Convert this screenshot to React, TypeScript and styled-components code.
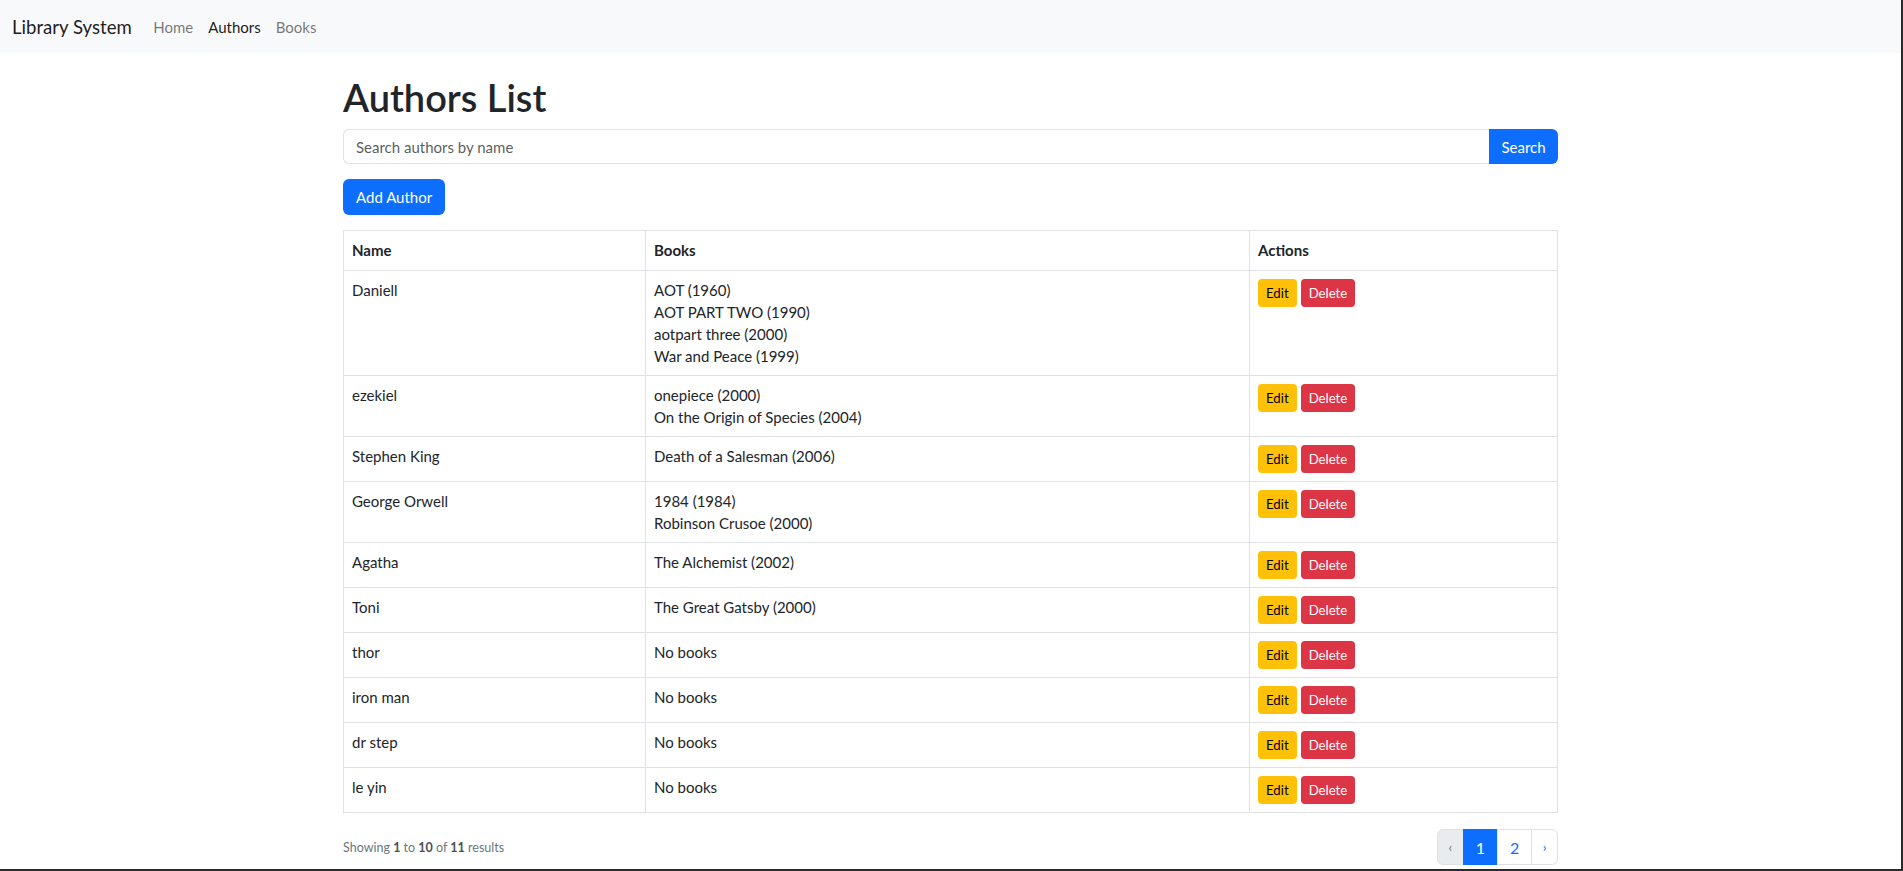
import React from "react";
import styled, { createGlobalStyle } from "styled-components";

const GlobalStyle = createGlobalStyle`
  *, *::before, *::after { box-sizing: border-box; }
  html, body { margin: 0; padding: 0; }
  body {
    font-family: Lato, "Open Sans", sans-serif;
    font-size: 15px;
    color: #212529;
    background: #fff;
  }
`;

const Frame = styled.div`
  height: 100vh;
  border-right: 2px solid #2b2b2b;
  border-bottom: 2px solid #2b2b2b;
  overflow: hidden;
`;

const Navbar = styled.nav`
  height: 53px;
  background: #f8f9fa;
  display: flex;
  align-items: center;
  padding: 0 12px;
`;

const Brand = styled.a`
  font-size: 18.6px;
  color: rgba(0, 0, 0, 0.9);
  margin-right: 14px;
  text-decoration: none;
`;

const NavLink = styled.a<{ $active?: boolean }>`
  padding: 0 7.5px;
  font-size: 15px;
  text-decoration: none;
  color: ${(p) => (p.$active ? "rgba(0,0,0,0.9)" : "rgba(0,0,0,0.55)")};
`;

const Container = styled.main`
  width: 1215px;
  margin: 0 auto;
  padding-top: 20px;
`;

const Title = styled.h1`
  margin: 0 0 8px;
  font-size: 38px;
  font-weight: 600;
  line-height: 48px;
`;

const SearchForm = styled.form`
  display: flex;
  height: 35px;
  margin-bottom: 15px;
`;

const SearchInput = styled.input`
  flex: 1;
  height: 100%;
  border: 1px solid #dee2e6;
  border-right: none;
  border-radius: 6px 0 0 6px;
  padding: 0 12px;
  font-family: inherit;
  font-size: 15px;
  color: #212529;
  outline: none;
  &::placeholder { color: rgba(33, 37, 41, 0.75); }
`;

const Button = styled.button<{ $variant: "primary" | "warning" | "danger"; $size?: "sm" }>`
  border: none;
  font-family: inherit;
  cursor: pointer;
  display: inline-flex;
  align-items: center;
  justify-content: center;
  background: ${(p) => (p.$variant === "primary" ? "#0d6efd" : p.$variant === "warning" ? "#ffc107" : "#dc3545")};
  color: ${(p) => (p.$variant === "warning" ? "#000" : "#fff")};
  font-size: ${(p) => (p.$size === "sm" ? "13.2px" : "15px")};
  height: ${(p) => (p.$size === "sm" ? "28px" : "36px")};
  padding: ${(p) => (p.$size === "sm" ? "0 8px" : "0 13px")};
  border-radius: ${(p) => (p.$size === "sm" ? "4px" : "6px")};
`;

const SearchButton = styled(Button)`
  height: 35px;
  width: 69px;
  border-radius: 0 6px 6px 0;
`;

const Table = styled.table`
  width: 100%;
  margin-top: 15px;
  border-collapse: collapse;
  table-layout: fixed;
`;

const Th = styled.th<{ $w?: string }>`
  width: ${(p) => p.$w || "auto"};
  text-align: left;
  font-weight: 700;
  padding: 8px;
  line-height: 23px;
  border: 1px solid #dee2e6;
`;

const Td = styled.td`
  padding: 8px;
  line-height: 22px;
  vertical-align: top;
  border: 1px solid #dee2e6;
`;

const ActionCell = styled(Td)`
  line-height: 0;
`;

const Actions = styled.div`
  display: flex;
  gap: 4px;
`;

const BookLine = styled.div`
  line-height: 22px;
`;

const Footer = styled.div`
  display: flex;
  justify-content: space-between;
  align-items: center;
  margin-top: 16px;
`;

const Summary = styled.p`
  margin: 0;
  font-size: 12.5px;
  color: #6c757d;
`;

const Strong = styled.span`
  font-weight: 700;
  color: #495057;
`;

const Pagination = styled.ul`
  display: flex;
  list-style: none;
  margin: 0;
  padding: 0;
`;

const PageItem = styled.li<{ $active?: boolean; $disabled?: boolean; $chev?: boolean }>`
  height: 36px;
  padding: 0 ${(p) => (p.$chev ? "10.5px" : "12px")};
  display: flex;
  align-items: center;
  justify-content: center;
  font-size: ${(p) => (p.$chev ? "13px" : "16px")};
  border: 1px solid ${(p) => (p.$active ? "#0d6efd" : "#dee2e6")};
  margin-left: -1px;
  background: ${(p) => (p.$active ? "#0d6efd" : p.$disabled ? "#e9ecef" : "#fff")};
  color: ${(p) => (p.$active ? "#fff" : p.$disabled ? "#6c757d" : "#0d6efd")};
  &:first-child { margin-left: 0; border-radius: 6px 0 0 6px; }
  &:last-child { border-radius: 0 6px 6px 0; }
`;

type Author = { name: string; books: string[] };

const authors: Author[] = [
  { name: "Daniell", books: ["AOT (1960)", "AOT PART TWO (1990)", "aotpart three (2000)", "War and Peace (1999)"] },
  { name: "ezekiel", books: ["onepiece (2000)", "On the Origin of Species (2004)"] },
  { name: "Stephen King", books: ["Death of a Salesman (2006)"] },
  { name: "George Orwell", books: ["1984 (1984)", "Robinson Crusoe (2000)"] },
  { name: "Agatha", books: ["The Alchemist (2002)"] },
  { name: "Toni", books: ["The Great Gatsby (2000)"] },
  { name: "thor", books: [] },
  { name: "iron man", books: [] },
  { name: "dr step", books: [] },
  { name: "le yin", books: [] },
];

export default function App() {
  return (
    <>
      <GlobalStyle />
      <Frame>
        <Navbar>
          <Brand href="#">Library System</Brand>
          <NavLink href="#">Home</NavLink>
          <NavLink href="#" $active>Authors</NavLink>
          <NavLink href="#">Books</NavLink>
        </Navbar>
        <Container>
          <Title>Authors List</Title>
          <SearchForm onSubmit={(e) => e.preventDefault()}>
            <SearchInput placeholder="Search authors by name" />
            <SearchButton $variant="primary" type="submit">Search</SearchButton>
          </SearchForm>
          <Button $variant="primary">Add Author</Button>
          <Table>
            <thead>
              <tr>
                <Th $w="302px">Name</Th>
                <Th $w="604px">Books</Th>
                <Th>Actions</Th>
              </tr>
            </thead>
            <tbody>
              {authors.map((a) => (
                <tr key={a.name}>
                  <Td>{a.name}</Td>
                  <Td>
                    {a.books.length === 0 ? (
                      <BookLine>No books</BookLine>
                    ) : (
                      a.books.map((b) => <BookLine key={b}>{b}</BookLine>)
                    )}
                  </Td>
                  <ActionCell>
                    <Actions>
                      <Button $variant="warning" $size="sm">Edit</Button>
                      <Button $variant="danger" $size="sm">Delete</Button>
                    </Actions>
                  </ActionCell>
                </tr>
              ))}
            </tbody>
          </Table>
          <Footer>
            <Summary>
              Showing <Strong>1</Strong> to <Strong>10</Strong> of <Strong>11</Strong> results
            </Summary>
            <Pagination>
              <PageItem $disabled $chev>‹</PageItem>
              <PageItem $active>1</PageItem>
              <PageItem>2</PageItem>
              <PageItem $chev>›</PageItem>
            </Pagination>
          </Footer>
        </Container>
      </Frame>
    </>
  );
}
